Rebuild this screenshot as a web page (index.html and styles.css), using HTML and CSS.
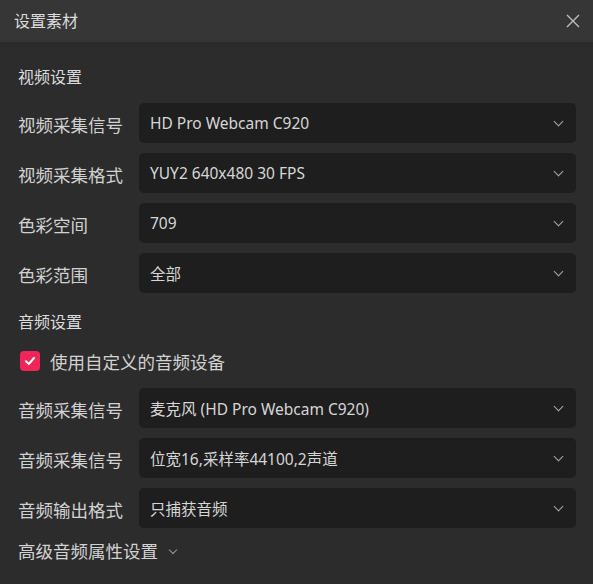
FILE: index.html
```html
<!DOCTYPE html>
<html lang="zh-CN">
<head>
    <meta charset="UTF-8">
    <meta name="viewport" content="width=device-width, initial-scale=1.0">
    <title>设置素材</title>
    <link rel="stylesheet" href="styles.css">
</head>
<body>
    <div class="dialog">
        <div class="dialog-header">
            <span class="dialog-title">设置素材</span>
            <svg class="close" width="14" height="14" viewBox="0 0 14 14">
                <path d="M1 1L13 13M13 1L1 13" stroke="#bdbdbd" stroke-width="1.4" fill="none"/>
            </svg>
        </div>
        <div class="dialog-body">
            <div class="section-title video-title">视频设置</div>
            <div class="rows">
                <div class="row">
                    <label>视频采集信号</label>
                    <div class="select">HD Pro Webcam C920<span class="arrow"></span></div>
                </div>
                <div class="row">
                    <label>视频采集格式</label>
                    <div class="select">YUY2 640x480 30 FPS<span class="arrow"></span></div>
                </div>
                <div class="row">
                    <label>色彩空间</label>
                    <div class="select">709<span class="arrow"></span></div>
                </div>
                <div class="row">
                    <label>色彩范围</label>
                    <div class="select">全部<span class="arrow"></span></div>
                </div>
            </div>

            <div class="section-title audio-title">音频设置</div>
            <div class="check-row">
                <span class="checkbox">
                    <svg width="12" height="12" viewBox="0 0 12 12">
                        <path d="M2 6.2L4.8 9L10 3" stroke="#fff" stroke-width="2" fill="none" stroke-linecap="round" stroke-linejoin="round"/>
                    </svg>
                </span>
                <span>使用自定义的音频设备</span>
            </div>
            <div class="rows">
                <div class="row">
                    <label>音频采集信号</label>
                    <div class="select">麦克风 (HD Pro Webcam C920)<span class="arrow"></span></div>
                </div>
                <div class="row">
                    <label>音频采集信号</label>
                    <div class="select">位宽16,采样率44100,2声道<span class="arrow"></span></div>
                </div>
                <div class="row">
                    <label>音频输出格式</label>
                    <div class="select">只捕获音频<span class="arrow"></span></div>
                </div>
            </div>
            <div class="advanced">高级音频属性设置<span class="arrow small"></span></div>
        </div>
    </div>
</body>
</html>
```

FILE: styles.css
```css
body, html {
    margin: 0;
    height: 100%;
    background: #2c2c2c;
    font-family: 'Noto Sans', 'Noto Sans CJK SC', sans-serif;
    color: #d2d2d2;
}
.dialog {
    width: 593px;
    height: 584px;
    background: #2c2c2c;
}
.dialog-header {
    height: 42px;
    background: #363636;
    display: flex;
    align-items: center;
    justify-content: space-between;
    padding: 0 13px 0 14px;
}
.dialog-title {
    font-size: 16px;
    color: #dcdcdc;
    line-height: 24px;
}
.close {
    display: block;
}
.dialog-body {
    padding: 0 17px 0 18px;
}
.section-title {
    font-size: 16px;
    line-height: 24px;
    color: #dcdcdc;
}
.video-title {
    padding-top: 23px;
    margin-bottom: 14px;
}
.audio-title {
    margin-top: 17px;
    margin-bottom: 15px;
}
.rows {
    display: flex;
    flex-direction: column;
    gap: 10px;
}
.row {
    display: flex;
    align-items: center;
    height: 40px;
}
.row label {
    width: 121px;
    font-size: 17.5px;
    line-height: 24px;
    padding-top: 3px;
}
.select {
    flex: 1;
    height: 40px;
    background: #1e1e1e;
    border-radius: 5px;
    display: flex;
    align-items: center;
    padding: 0 14px 0 11px;
    font-size: 15.5px;
    color: #d6d6d6;
}
.arrow {
    margin-left: auto;
    width: 6px;
    height: 6px;
    border-right: 1.3px solid #a8a8a8;
    border-bottom: 1.3px solid #a8a8a8;
    transform: rotate(45deg);
    margin-top: -4px;
}
.arrow.small {
    margin-left: 12px;
    width: 5px;
    height: 5px;
    margin-top: -3px;
    border-color: #9a9a9a;
}
.check-row {
    display: flex;
    align-items: center;
    height: 24px;
    font-size: 17.5px;
    margin-bottom: 15px;
    padding-left: 2px;
}
.checkbox {
    width: 20px;
    height: 20px;
    border-radius: 4px;
    background: #f0265a;
    display: flex;
    align-items: center;
    justify-content: center;
    margin-right: 10px;
}
.advanced {
    margin-top: 11px;
    display: flex;
    align-items: center;
    font-size: 17.5px;
    line-height: 24px;
}
```
